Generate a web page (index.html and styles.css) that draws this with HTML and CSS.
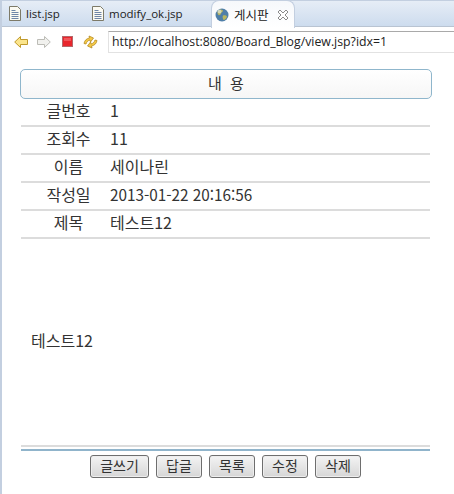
FILE: index.html
```html
<!DOCTYPE html>
<html lang="ko">
<head>
    <meta charset="UTF-8">
    <meta name="viewport" content="width=device-width, initial-scale=1.0">
    <title>게시판</title>
    <link rel="stylesheet" href="styles.css">
</head>

<body>

    <!-- Tabs -->
    <div class="tabs">
        <div class="tab tab-list">
            <svg width="12" height="15" viewBox="0 0 12 15"><path d="M.5 .5h8l3 3v11H.5z" fill="#fbfaf2" stroke="#7d7a68"/><path d="M2.500 4.500h4M2.500 6.500h7M2.500 8.500h7M2.500 10.500h7M2.500 12.500h7" stroke="#6f86a8"/></svg>
            <span>list.jsp</span>
        </div>
        <div class="tab tab-modify">
            <svg width="12" height="15" viewBox="0 0 12 15"><path d="M.5 .5h8l3 3v11H.5z" fill="#fbfaf2" stroke="#7d7a68"/><path d="M2.500 4.500h4M2.500 6.500h7M2.500 8.500h7M2.500 10.500h7M2.500 12.500h7" stroke="#6f86a8"/></svg>
            <span>modify_ok.jsp</span>
        </div>
        <div class="tab tab-active">
            <svg width="14" height="14" viewBox="0 0 14 14"><circle cx="7" cy="7" r="6.500" fill="#4f7fa8"/><path d="M3 2.500c2-1.500 4-1 5 0 0 1.500-1.500 1.500-2 3-.5 1.500-1.500 2-2.500 1.500C2.500 6.500 2 4 3 2.500zM8 7.500c1.500-.5 3.500 0 4 1-.5 2-2 3.500-3.500 3.500-.5-1.500-1.500-3-.5-4.500z" fill="#b9b65f"/><circle cx="4.500" cy="3.500" r="2" fill="#e6edf2" opacity=".6"/></svg>
            <span class="tab-title">게시판</span>
            <svg class="tab-close" width="12" height="12" viewBox="0 0 12 12"><path d="M1 3l2-2 3 3 3-3 2 2-3 3 3 3-2 2-3-3-3 3-2-2 3-3z" fill="#fff" stroke="#8a8a8a"/></svg>
        </div>
    </div>

    <!-- Browser toolbar -->
    <div class="toolbar">
        <svg class="tool-back" width="14" height="12" viewBox="0 0 14 12"><path d="M.7 6l5.800-5.500v3h7v5h-7v3z" fill="#fbe58c" stroke="#c09a2c"/></svg>
        <svg class="tool-forward" width="14" height="12" viewBox="0 0 14 12"><path d="M13.300 6L7.500 .5v3h-7v5h7v3z" fill="#f1f1ee" stroke="#bcbcb6"/></svg>
        <svg class="tool-stop" width="11" height="11" viewBox="0 0 11 11"><rect x=".5" y=".5" width="10" height="10" fill="#e8262c" stroke="#b4676a"/><rect x="2" y="2" width="7" height="3" fill="#f0565a"/></svg>
        <svg class="tool-refresh" width="15" height="16" viewBox="0 0 15 16"><path d="M1 9.500c.5-3 2.500-5 5.500-5.500L6 2l4.500 2-3 4-.5-2C5 6.500 3.500 8 3 10zM14 6.500c-.5 3-2.500 5-5.500 5.500l.5 2-4.500-2 3-4 .5 2c2-.5 3.500-2 4-4z" fill="#f5c945" stroke="#b58c24" stroke-width=".8"/></svg>
        <div class="url-box">http://localhost:8080/Board_Blog/view.jsp?idx=1</div>
    </div>

    <!-- Page -->
    <div class="page">
        <div class="title-box">내 용</div>

        <div class="row"><div class="label">글번호</div><div class="value">1</div></div>
        <div class="row"><div class="label">조회수</div><div class="value">11</div></div>
        <div class="row"><div class="label">이름</div><div class="value">세이나린</div></div>
        <div class="row"><div class="label">작성일</div><div class="value date">2013-01-22 20:16:56</div></div>
        <div class="row"><div class="label">제목</div><div class="value">테스트12</div></div>

        <div class="content">테스트12</div>

        <div class="line-gray"></div>
        <div class="line-blue"></div>

        <div class="buttons">
            <button class="btn btn-wide">글쓰기</button>
            <button class="btn">답글</button>
            <button class="btn">목록</button>
            <button class="btn">수정</button>
            <button class="btn">삭제</button>
        </div>
    </div>

</body>
</html>
```

FILE: styles.css
```css
body {
    margin: 0;
    height: 494px;
    overflow: hidden;
    background-color: #fff;
    border-left: 2px solid #c3cfe0;
    box-sizing: border-box;
    font-family: "Noto Sans CJK KR", "Liberation Sans", sans-serif;
    color: #333;
}
.tabs {
    display: flex;
    height: 27px;
    margin-left: -2px;
    box-sizing: border-box;
    background: linear-gradient(#e6edf6, #cddcee);
    border-top: 1px solid #c3cfe0;
    border-bottom: 1px solid #b9c4d2;
    font-family: "Open Sans", "Liberation Sans", sans-serif;
    font-size: 11.5px;
}
.tab {
    display: flex;
    align-items: center;
    gap: 5px;
    color: #222;
}
.tab-list {
    width: 83px;
    padding-left: 9px;
    box-sizing: border-box;
}
.tab-modify {
    width: 118px;
    padding-left: 9px;
    box-sizing: border-box;
}
.tab-active {
    width: 84px;
    height: 28px;
    margin: -1px 0 -1px 10px;
    padding-left: 3px;
    box-sizing: border-box;
    background: linear-gradient(#f6f8fb, #fff);
    border: 1px solid #c3cfe0;
    border-bottom: none;
    border-radius: 8px 8px 0 0;
}
.tab-title {
    font-family: "Noto Sans CJK KR", sans-serif;
    font-size: 12.5px;
}
.tab-close {
    margin-left: 3px;
}
.toolbar {
    display: flex;
    align-items: center;
    height: 27px;
    padding-left: 14px;
    margin-top: 1px;
    margin-left: -2px;
    margin-bottom: 14px;
}
.tool-forward {
    margin-left: 9px;
}
.tool-stop {
    margin-left: 11px;
}
.tool-refresh {
    margin-left: 10px;
}
.url-box {
    flex: 1;
    height: 22px;
    margin-left: 10px;
    padding-left: 3px;
    box-sizing: border-box;
    border-top: 1px solid #a9a9a9;
    border-left: 1px solid #e2e2e2;
    border-bottom: 1px solid #e2e2e2;
    font-family: "Open Sans", "Liberation Sans", sans-serif;
    font-size: 12.3px;
    line-height: 20px;
    color: #222;
    white-space: nowrap;
}
.page {
    padding-left: 18px;
    width: 412px;
}
.title-box {
    width: 412px;
    height: 30px;
    box-sizing: border-box;
    border: 1px solid #8fb6cc;
    border-radius: 5px;
    background: linear-gradient(#fff, #f6f6f6);
    text-align: center;
    font-size: 15px;
    word-spacing: 4px;
    line-height: 26px;
}
.row {
    display: flex;
    width: 409px;
    margin-left: 1px;
    height: 28px;
    align-items: center;
    box-sizing: border-box;
    border-bottom: 2px solid #dcdcdc;
    padding-bottom: 4px;
    font-size: 16px;
}
.label {
    width: 89px;
    padding-left: 6px;
    box-sizing: border-box;
    text-align: center;
}
.date {
    font-size: 15.3px;
}
.content {
    height: 206px;
    margin-left: 11px;
    padding-bottom: 4px;
    box-sizing: border-box;
    display: flex;
    align-items: center;
    font-size: 16px;
}
.line-gray {
    width: 409px;
    margin-left: 1px;
    height: 2px;
    background-color: #dcdcdc;
}
.line-blue {
    width: 409px;
    margin-left: 1px;
    margin-top: 2px;
    height: 2px;
    background-color: #90b4cb;
}
.buttons {
    display: flex;
    gap: 7px;
    margin-top: 4px;
    margin-left: 70px;
}
.btn {
    width: 46px;
    height: 23px;
    padding: 0 0 4px;
    border: 1px solid #6e6e6e;
    border-radius: 3px;
    background: linear-gradient(#f4f4f4, #d6d6d6);
    font-family: "Noto Sans CJK KR", sans-serif;
    font-size: 14px;
    line-height: 16px;
    color: #333;
    box-shadow: inset 0 0 0 1px #eee;
}
.btn-wide {
    width: 59px;
}
```
